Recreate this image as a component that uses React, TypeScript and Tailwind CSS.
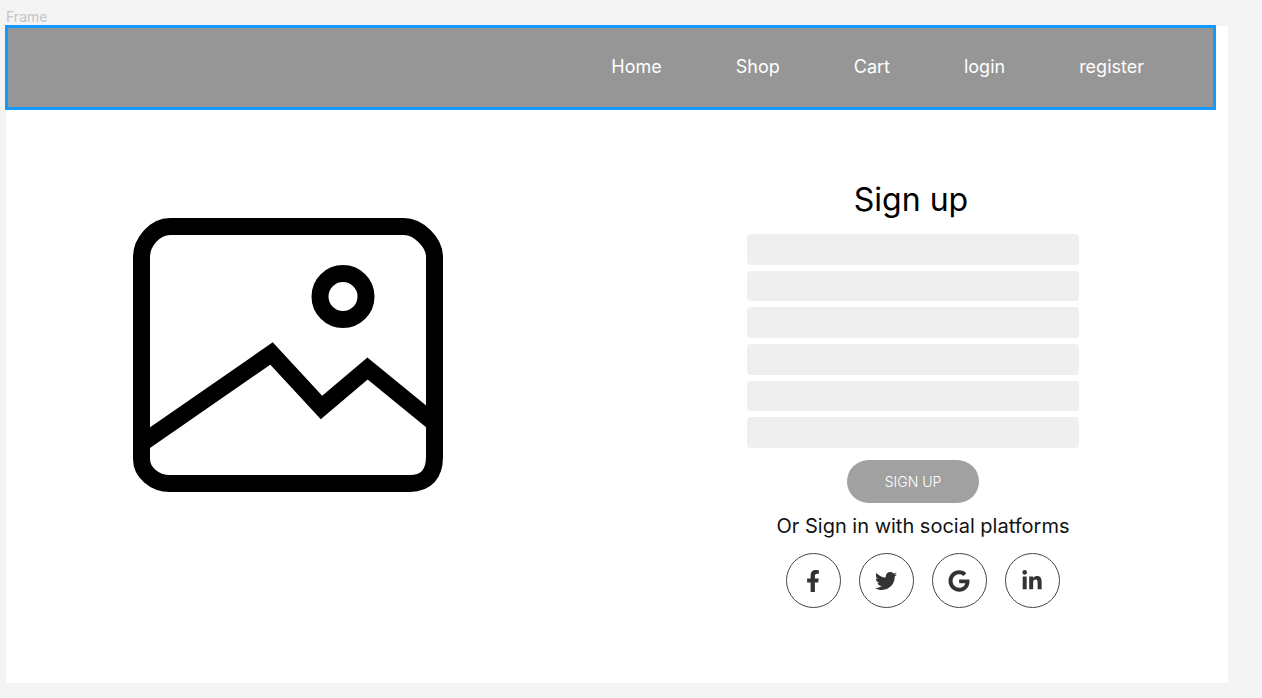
import React from "react";
import { FaFacebookF, FaGoogle, FaLinkedinIn, FaTwitter } from "react-icons/fa";

const links = ["Home", "Shop", "Cart", "login", "register"];

const fields = [
  { label: "First name", type: "text" },
  { label: "Last name", type: "text" },
  { label: "Username", type: "text" },
  { label: "Email", type: "email" },
  { label: "Password", type: "password" },
  { label: "Confirm password", type: "password" },
];

const socials = [
  { label: "Facebook", icon: <FaFacebookF size={22} /> },
  { label: "Twitter", icon: <FaTwitter size={22} /> },
  { label: "Google", icon: <FaGoogle size={22} /> },
  { label: "LinkedIn", icon: <FaLinkedinIn size={22} /> },
];

function NavBar() {
  return (
    <nav className="mr-[13px] flex h-[83px] items-center justify-end gap-[74px] bg-[#969696] pr-[71px] pb-0.5 text-lg text-white outline-3 -outline-offset-2 outline-[#1199ff]">
      {links.map((link) => (
        <a key={link} href="#">
          {link}
        </a>
      ))}
    </nav>
  );
}

function PicturePlaceholder() {
  return (
    <svg
      viewBox="0 0 310 275"
      className="w-[310px] max-w-full"
      fill="none"
      stroke="#000"
      strokeWidth="17"
      aria-hidden="true"
    >
      <path d="M37 8.500H271C285 8.500 301.500 24 301.500 39V239C301.500 256 293 265.500 277 265.500H37C21 265.500 8.500 254 8.500 241V39C8.500 24 22 8.500 37 8.500Z" />
      <circle cx="210" cy="78.500" r="23" />
      <path d="M10 224.500L138.500 135.500L188.500 189.500L234.500 150.500L300 204" />
    </svg>
  );
}

function SignUpForm() {
  return (
    <form className="flex w-[332px] flex-col items-center" onSubmit={(e) => e.preventDefault()}>
      <h1 className="pr-1 text-[32px] leading-10 text-black">Sign up</h1>
      <div className="mt-[14px] grid h-[214px] w-full grid-rows-6 gap-1.5">
        {fields.map((field) => (
          <input
            key={field.label}
            type={field.type}
            aria-label={field.label}
            className="min-h-0 w-full rounded-sm bg-[#efefef] px-3 text-sm"
          />
        ))}
      </div>
      <button type="submit" className="mt-3 h-[43px] w-[132px] rounded-full bg-[#a1a1a1] text-sm font-light text-white">
        SIGN UP
      </button>
    </form>
  );
}

function SocialSignIn() {
  return (
    <section className="mt-2 flex flex-col items-center pl-5">
      <p className="text-xl leading-[30px] whitespace-nowrap text-[#111]">Or Sign in with social platforms</p>
      <div className="mt-3 flex gap-[18px]">
        {socials.map((social) => (
          <a
            key={social.label}
            href="#"
            aria-label={social.label}
            className="flex size-[55px] items-center justify-center rounded-full border border-[#444] text-[#333]"
          >
            {social.icon}
          </a>
        ))}
      </div>
    </section>
  );
}

export default function App() {
  return (
    <div className="flex min-h-screen flex-col bg-[#f4f4f4] pr-[34px] pb-[15px] pl-1.5 font-['Inter',sans-serif]">
      <div className="h-[26px] pt-2 text-sm leading-[18px] text-[#c4c4c4]">Frame</div>
      <div className="flex grow flex-col bg-white">
        <NavBar />
        <main className="grid grid-cols-[6fr_7fr]">
          <div className="flex items-start justify-center pt-[109px]">
            <PicturePlaceholder />
          </div>
          <div className="flex flex-col items-center pt-[71px] pl-7">
            <SignUpForm />
            <SocialSignIn />
          </div>
        </main>
      </div>
    </div>
  );
}
